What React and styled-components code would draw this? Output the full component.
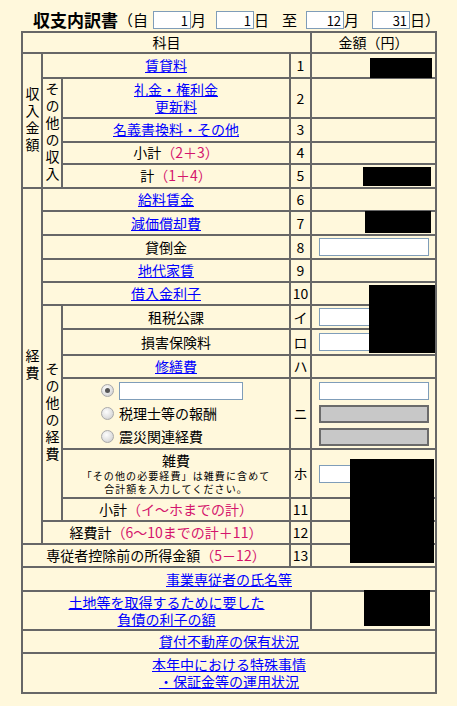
import React from "react";
import styled, { createGlobalStyle } from "styled-components";

const GlobalStyle = createGlobalStyle`
  body {
    margin: 0;
    background: #fff8dc;
    color: #000;
    font-family: "Noto Sans CJK JP", "Noto Sans", sans-serif;
  }
`;

const App = () => {
  return (
    <Page>
      <GlobalStyle />
      <TitleBar>
        <Title>収支内訳書</Title>
        <Word>（自</Word>
        <DateInput $gap={5} defaultValue="1" />
        <Word>月</Word>
        <DateInput $gap={10} defaultValue="1" />
        <Word>日</Word>
        <Word $gap={13}>至</Word>
        <DateInput $gap={9} defaultValue="12" />
        <Word>月</Word>
        <DateInput $gap={13} defaultValue="31" />
        <Word>日）</Word>
      </TitleBar>

      <Sheet>
        <colgroup>
          <Col $w={20} />
          <Col $w={20} />
          <Col $w={228} />
          <Col $w={21} />
          <Col $w={125} />
        </colgroup>
        <tbody>
          <Row $h={21}>
            <Cell colSpan={4}>科目</Cell>
            <Cell>金額（円）</Cell>
          </Row>

          <Row $h={25}>
            <Cell rowSpan={5}>
              <VLabel>収入金額</VLabel>
            </Cell>
            <Cell colSpan={2}>
              <Link href="#">賃貸料</Link>
            </Cell>
            <Cell>1</Cell>
            <Cell />
          </Row>
          <Row $h={40}>
            <Cell rowSpan={4}>
              <VLabel>その他の収入</VLabel>
            </Cell>
            <Cell>
              <Link href="#">
                礼金・権利金
                <br />
                更新料
              </Link>
            </Cell>
            <Cell>2</Cell>
            <Cell />
          </Row>
          <Row $h={23}>
            <Cell>
              <Link href="#">名義書換料・その他</Link>
            </Cell>
            <Cell>3</Cell>
            <Cell />
          </Row>
          <Row $h={22}>
            <Cell>
              小計<Calc>（2＋3）</Calc>
            </Cell>
            <Cell>4</Cell>
            <Cell />
          </Row>
          <Row $h={24}>
            <Cell>
              計<Calc>（1＋4）</Calc>
            </Cell>
            <Cell>5</Cell>
            <Cell />
          </Row>

          <Row $h={23}>
            <Cell rowSpan={12}>
              <VLabel>経費</VLabel>
            </Cell>
            <Cell colSpan={2}>
              <Link href="#">給料賃金</Link>
            </Cell>
            <Cell>6</Cell>
            <Cell />
          </Row>
          <Row $h={24}>
            <Cell colSpan={2}>
              <Link href="#">減価償却費</Link>
            </Cell>
            <Cell>7</Cell>
            <Cell />
          </Row>
          <Row $h={24}>
            <Cell colSpan={2}>貸倒金</Cell>
            <Cell>8</Cell>
            <Cell>
              <AmountInput />
            </Cell>
          </Row>
          <Row $h={23}>
            <Cell colSpan={2}>
              <Link href="#">地代家賃</Link>
            </Cell>
            <Cell>9</Cell>
            <Cell />
          </Row>
          <Row $h={23}>
            <Cell colSpan={2}>
              <Link href="#">借入金利子</Link>
            </Cell>
            <Cell>10</Cell>
            <Cell />
          </Row>
          <Row $h={24}>
            <Cell rowSpan={6}>
              <VLabel>その他の経費</VLabel>
            </Cell>
            <Cell>租税公課</Cell>
            <Cell>イ</Cell>
            <Cell>
              <AmountInput />
            </Cell>
          </Row>
          <Row $h={26}>
            <Cell>損害保険料</Cell>
            <Cell>ロ</Cell>
            <Cell>
              <AmountInput />
            </Cell>
          </Row>
          <Row $h={23}>
            <Cell>
              <Link href="#">修繕費</Link>
            </Cell>
            <Cell>ハ</Cell>
            <Cell />
          </Row>
          <Row $h={71}>
            <Cell $left>
              <OptionList>
                <OptionLine>
                  <Radio $checked />
                  <NameInput />
                </OptionLine>
                <OptionLine>
                  <Radio />
                  税理士等の報酬
                </OptionLine>
                <OptionLine>
                  <Radio />
                  震災関連経費
                </OptionLine>
              </OptionList>
            </Cell>
            <Cell>ニ</Cell>
            <Cell>
              <InputStack>
                <AmountInput />
                <AmountInput $disabled disabled />
                <AmountInput $disabled disabled />
              </InputStack>
            </Cell>
          </Row>
          <Row $h={49}>
            <Cell>
              <Heading>雑費</Heading>
              <Note>
                「その他の必要経費」は雑費に含めて
                <br />
                合計額を入力してください。
              </Note>
            </Cell>
            <Cell>ホ</Cell>
            <Cell>
              <AmountInput />
            </Cell>
          </Row>
          <Row $h={23}>
            <Cell>
              小計<Calc>（イ～ホまでの計）</Calc>
            </Cell>
            <Cell>11</Cell>
            <Cell />
          </Row>
          <Row $h={23}>
            <Cell colSpan={2}>
              経費計<Calc>（6～10までの計＋11）</Calc>
            </Cell>
            <Cell>12</Cell>
            <Cell />
          </Row>

          <Row $h={23}>
            <Cell colSpan={3}>
              専従者控除前の所得金額<Calc>（5－12）</Calc>
            </Cell>
            <Cell>13</Cell>
            <Cell />
          </Row>
          <Row $h={24}>
            <Cell colSpan={5}>
              <Link href="#">事業専従者の氏名等</Link>
            </Cell>
          </Row>
          <Row $h={39}>
            <Cell colSpan={4}>
              <Link href="#">
                土地等を取得するために要した
                <br />
                負債の利子の額
              </Link>
            </Cell>
            <Cell />
          </Row>
          <Row $h={23}>
            <Cell colSpan={5}>
              <Link href="#">貸付不動産の保有状況</Link>
            </Cell>
          </Row>
          <Row $h={40}>
            <Cell colSpan={5}>
              <Link href="#">
                本年中における特殊事情
                <br />
                ・保証金等の運用状況
              </Link>
            </Cell>
          </Row>
        </tbody>
      </Sheet>

      {/* blacked-out amounts */}
      <Redaction $x={370} $y={58} $w={62} $h={20} />
      <Redaction $x={363} $y={167} $w={68} $h={19} />
      <Redaction $x={365} $y={211} $w={66} $h={22} />
      <Redaction $x={369} $y={285} $w={66} $h={68} />
      <Redaction $x={350} $y={459} $w={84} $h={104} />
      <Redaction $x={364} $y={590} $w={66} $h={36} />
    </Page>
  );
};

const Page = styled.div`
  position: relative;
  min-height: 706px;
  padding-left: 21px;
  box-sizing: border-box;
`;

const TitleBar = styled.div`
  display: flex;
  align-items: center;
  height: 22px;
  padding: 9px 0 0 12px;
  font-size: 15px;
  line-height: 18px;
`;

const Title = styled.h1`
  margin: 0;
  font-size: 17px;
  font-weight: bold;
`;

const Word = styled.span`
  margin-left: ${(p) => p.$gap || 0}px;
  white-space: nowrap;
`;

const DateInput = styled.input`
  box-sizing: border-box;
  width: 38px;
  height: 18px;
  margin: 0 0 0 ${(p) => p.$gap || 0}px;
  padding: 0 2px;
  border: 1px solid #7f9db9;
  background: #fff;
  font-family: "Noto Sans CJK JP", sans-serif;
  font-size: 13px;
  text-align: right;
`;

const Sheet = styled.table`
  border-collapse: separate;
  border-spacing: 0;
  table-layout: fixed;
  width: 416px;
  border-top: 2px solid #676767;
  border-left: 2px solid #676767;
  font-size: 14px;
  line-height: 17px;
`;

const Col = styled.col`
  width: ${(p) => p.$w}px;
`;

const Row = styled.tr`
  height: ${(p) => p.$h}px;
`;

const Cell = styled.td`
  border-right: 2px solid #676767;
  border-bottom: 2px solid #676767;
  padding: 0;
  text-align: ${(p) => (p.$left ? "left" : "center")};
  vertical-align: middle;
  white-space: nowrap;
`;

const VLabel = styled.div`
  display: inline-block;
  writing-mode: vertical-rl;
  text-orientation: upright;
  letter-spacing: 3px;
  line-height: 17px;
  padding-top: 3px;
`;

const Link = styled.a`
  color: #0000ff;
  text-decoration: underline;
  cursor: pointer;
`;

const Calc = styled.span`
  color: #d4146c;
`;

const AmountInput = styled.input`
  display: block;
  box-sizing: border-box;
  width: 110px;
  height: 18px;
  margin: 0 auto;
  padding: 0 2px;
  border: ${(p) => (p.$disabled ? "2px solid #6b6b6b" : "1px solid #7f9db9")};
  background: ${(p) => (p.$disabled ? "#c8c8c8" : "#fff")};
  font-family: "Noto Sans CJK JP", sans-serif;
  font-size: 13px;
  text-align: right;
`;

const InputStack = styled.div`
  display: flex;
  flex-direction: column;
  gap: 5px;
`;

const OptionList = styled.div`
  display: flex;
  flex-direction: column;
  padding-left: 38px;
`;

const OptionLine = styled.div`
  display: flex;
  align-items: center;
  gap: 5px;
  height: 23px;
`;

const Radio = styled.span`
  position: relative;
  flex: none;
  width: 11px;
  height: 11px;
  border: 1px solid #a9a9a9;
  border-radius: 50%;
  background: radial-gradient(circle at 40% 35%, #fdfdfd 0%, #e2e2e2 55%, #c4c4c4 100%);

  &::after {
    content: "";
    display: ${(p) => (p.$checked ? "block" : "none")};
    position: absolute;
    left: 3px;
    top: 3px;
    width: 5px;
    height: 5px;
    border-radius: 50%;
    background: #555;
  }
`;

const NameInput = styled.input`
  box-sizing: border-box;
  width: 124px;
  height: 18px;
  margin: 0;
  padding: 0 2px;
  border: 1px solid #7f9db9;
  background: #fff;
  font-family: "Noto Sans CJK JP", sans-serif;
  font-size: 13px;
`;

const Heading = styled.div`
  font-size: 14px;
  line-height: 17px;
`;

const Note = styled.div`
  font-size: 10px;
  line-height: 13px;
  letter-spacing: 1.1px;
`;

const Redaction = styled.div`
  position: absolute;
  left: ${(p) => p.$x}px;
  top: ${(p) => p.$y}px;
  width: ${(p) => p.$w}px;
  height: ${(p) => p.$h}px;
  background: #000;
`;

export default App;
